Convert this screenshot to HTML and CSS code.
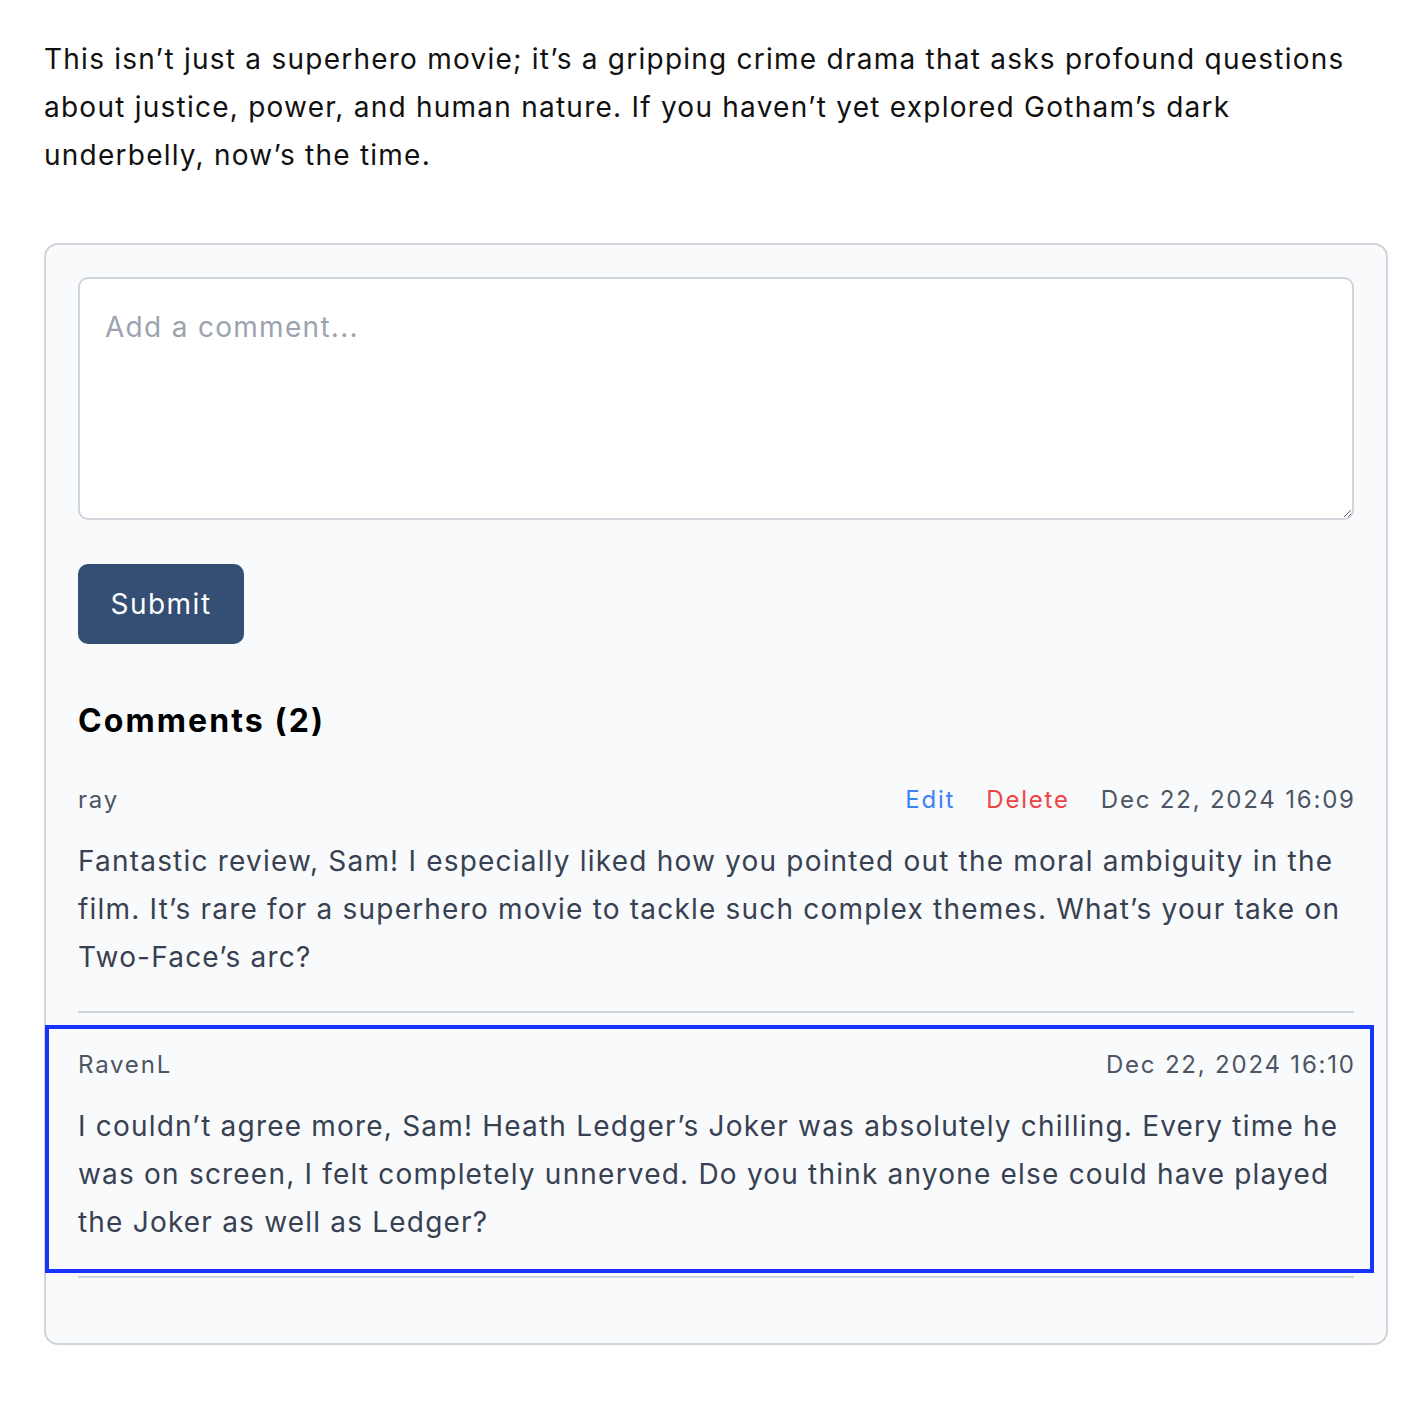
FILE: index.html
```html
<!DOCTYPE html>
<html lang="en">
<head>
<meta charset="utf-8">
<title>Review comments</title>
<link rel="stylesheet" href="styles.css">
</head>
<body>
<main class="page">
  <p class="lead">This isn’t just a superhero movie; it’s a gripping crime drama that asks profound questions about justice, power, and human nature. If you haven’t yet explored Gotham’s dark underbelly, now’s the time.</p>

  <section class="card">
    <textarea class="comment-input" placeholder="Add a comment..."></textarea>
    <button class="submit" type="button">Submit</button>

    <h2 class="comments-title">Comments (2)</h2>

    <ul class="comment-list">
      <li class="comment">
        <article class="comment-box">
          <div class="comment-meta">
            <span class="author">ray</span>
            <div class="meta-right">
              <a class="action edit" href="#">Edit</a>
              <a class="action delete" href="#">Delete</a>
              <time class="date">Dec 22, 2024 16:09</time>
            </div>
          </div>
          <p class="comment-body">Fantastic review, Sam! I especially liked how you pointed out the moral ambiguity in the film. It’s rare for a superhero movie to tackle such complex themes. What’s your take on Two-Face’s arc?</p>
        </article>
      </li>
      <li class="comment">
        <article class="comment-box focused">
          <div class="comment-meta">
            <span class="author">RavenL</span>
            <div class="meta-right">
              <time class="date">Dec 22, 2024 16:10</time>
            </div>
          </div>
          <p class="comment-body">I couldn’t agree more, Sam! Heath Ledger’s Joker was absolutely chilling. Every time he was on screen, I felt completely unnerved. Do you think anyone else could have played the Joker as well as Ledger?</p>
        </article>
      </li>
    </ul>
  </section>
</main>
</body>
</html>
```

FILE: styles.css
```css
* { box-sizing: border-box; }

html, body {
  margin: 0;
  padding: 0;
  background: #ffffff;
}

body {
  font-family: Inter, "Noto Sans", "Liberation Sans", sans-serif;
  color: #111111;
}

.page {
  width: 1388px;
  padding: 35px 0 40px 44px;
}

.lead {
  margin: 0 0 64px;
  font-size: 28px;
  line-height: 48px;
  color: #111111;
  letter-spacing: 1.24px;
}

.card {
  background: #f9fafb;
  border: 2px solid #d1d5db;
  border-radius: 14px;
  padding: 32px 32px 32px;
  display: flex;
  flex-direction: column;
  align-items: flex-start;
}

.comment-input {
  display: block;
  width: 100%;
  height: 243px;
  border: 2px solid #d1d5db;
  border-radius: 10px;
  background: #ffffff;
  padding: 24px 25px;
  font-family: inherit;
  font-size: 28px;
  line-height: 48px;
  letter-spacing: 1.3px;
  color: #111827;
  resize: vertical;
  margin: 0;
}

.comment-input::placeholder {
  color: #9ca3af;
}

.submit {
  margin-top: 44px;
  height: 80px;
  width: 166px;
  padding: 0;
  background: #344e74;
  color: #ffffff;
  border: none;
  border-radius: 10px;
  font-family: inherit;
  font-size: 28px;
  line-height: 48px;
  letter-spacing: 1.5px;
}

.comments-title {
  margin: 53px 0 3px;
  font-size: 32px;
  line-height: 48px;
  font-weight: 700;
  color: #000000;
  letter-spacing: 2.1px;
}

.comment-list {
  list-style: none;
  margin: 0 0 33px;
  padding: 0;
  width: 100%;
}

.comment {
  padding: 12px 0 3px;
  border-bottom: 2px solid #d1d5db;
}

.comment-box {
  margin: 0 -20px 0 -33px;
  padding: 18px 16px 23px 29px;
  border: 4px solid transparent;
}

.comment-box.focused {
  border-color: #1734ff;
}

.comment-meta {
  display: flex;
  justify-content: space-between;
  align-items: center;
  font-size: 24px;
  line-height: 36px;
  letter-spacing: 1.8px;
  color: #4b5563;
  margin-bottom: 19px;
}

.meta-right {
  display: flex;
  align-items: center;
  gap: 31px;
  margin-right: -1.8px;
}

.action {
  text-decoration: none;
}

.edit { color: #3b82f6; }
.delete { color: #ef4444; }

.date { color: #4b5563; }

.comment-body {
  margin: 0;
  font-size: 28px;
  line-height: 48px;
  color: #374151;
  letter-spacing: 1.2px;
}
```
